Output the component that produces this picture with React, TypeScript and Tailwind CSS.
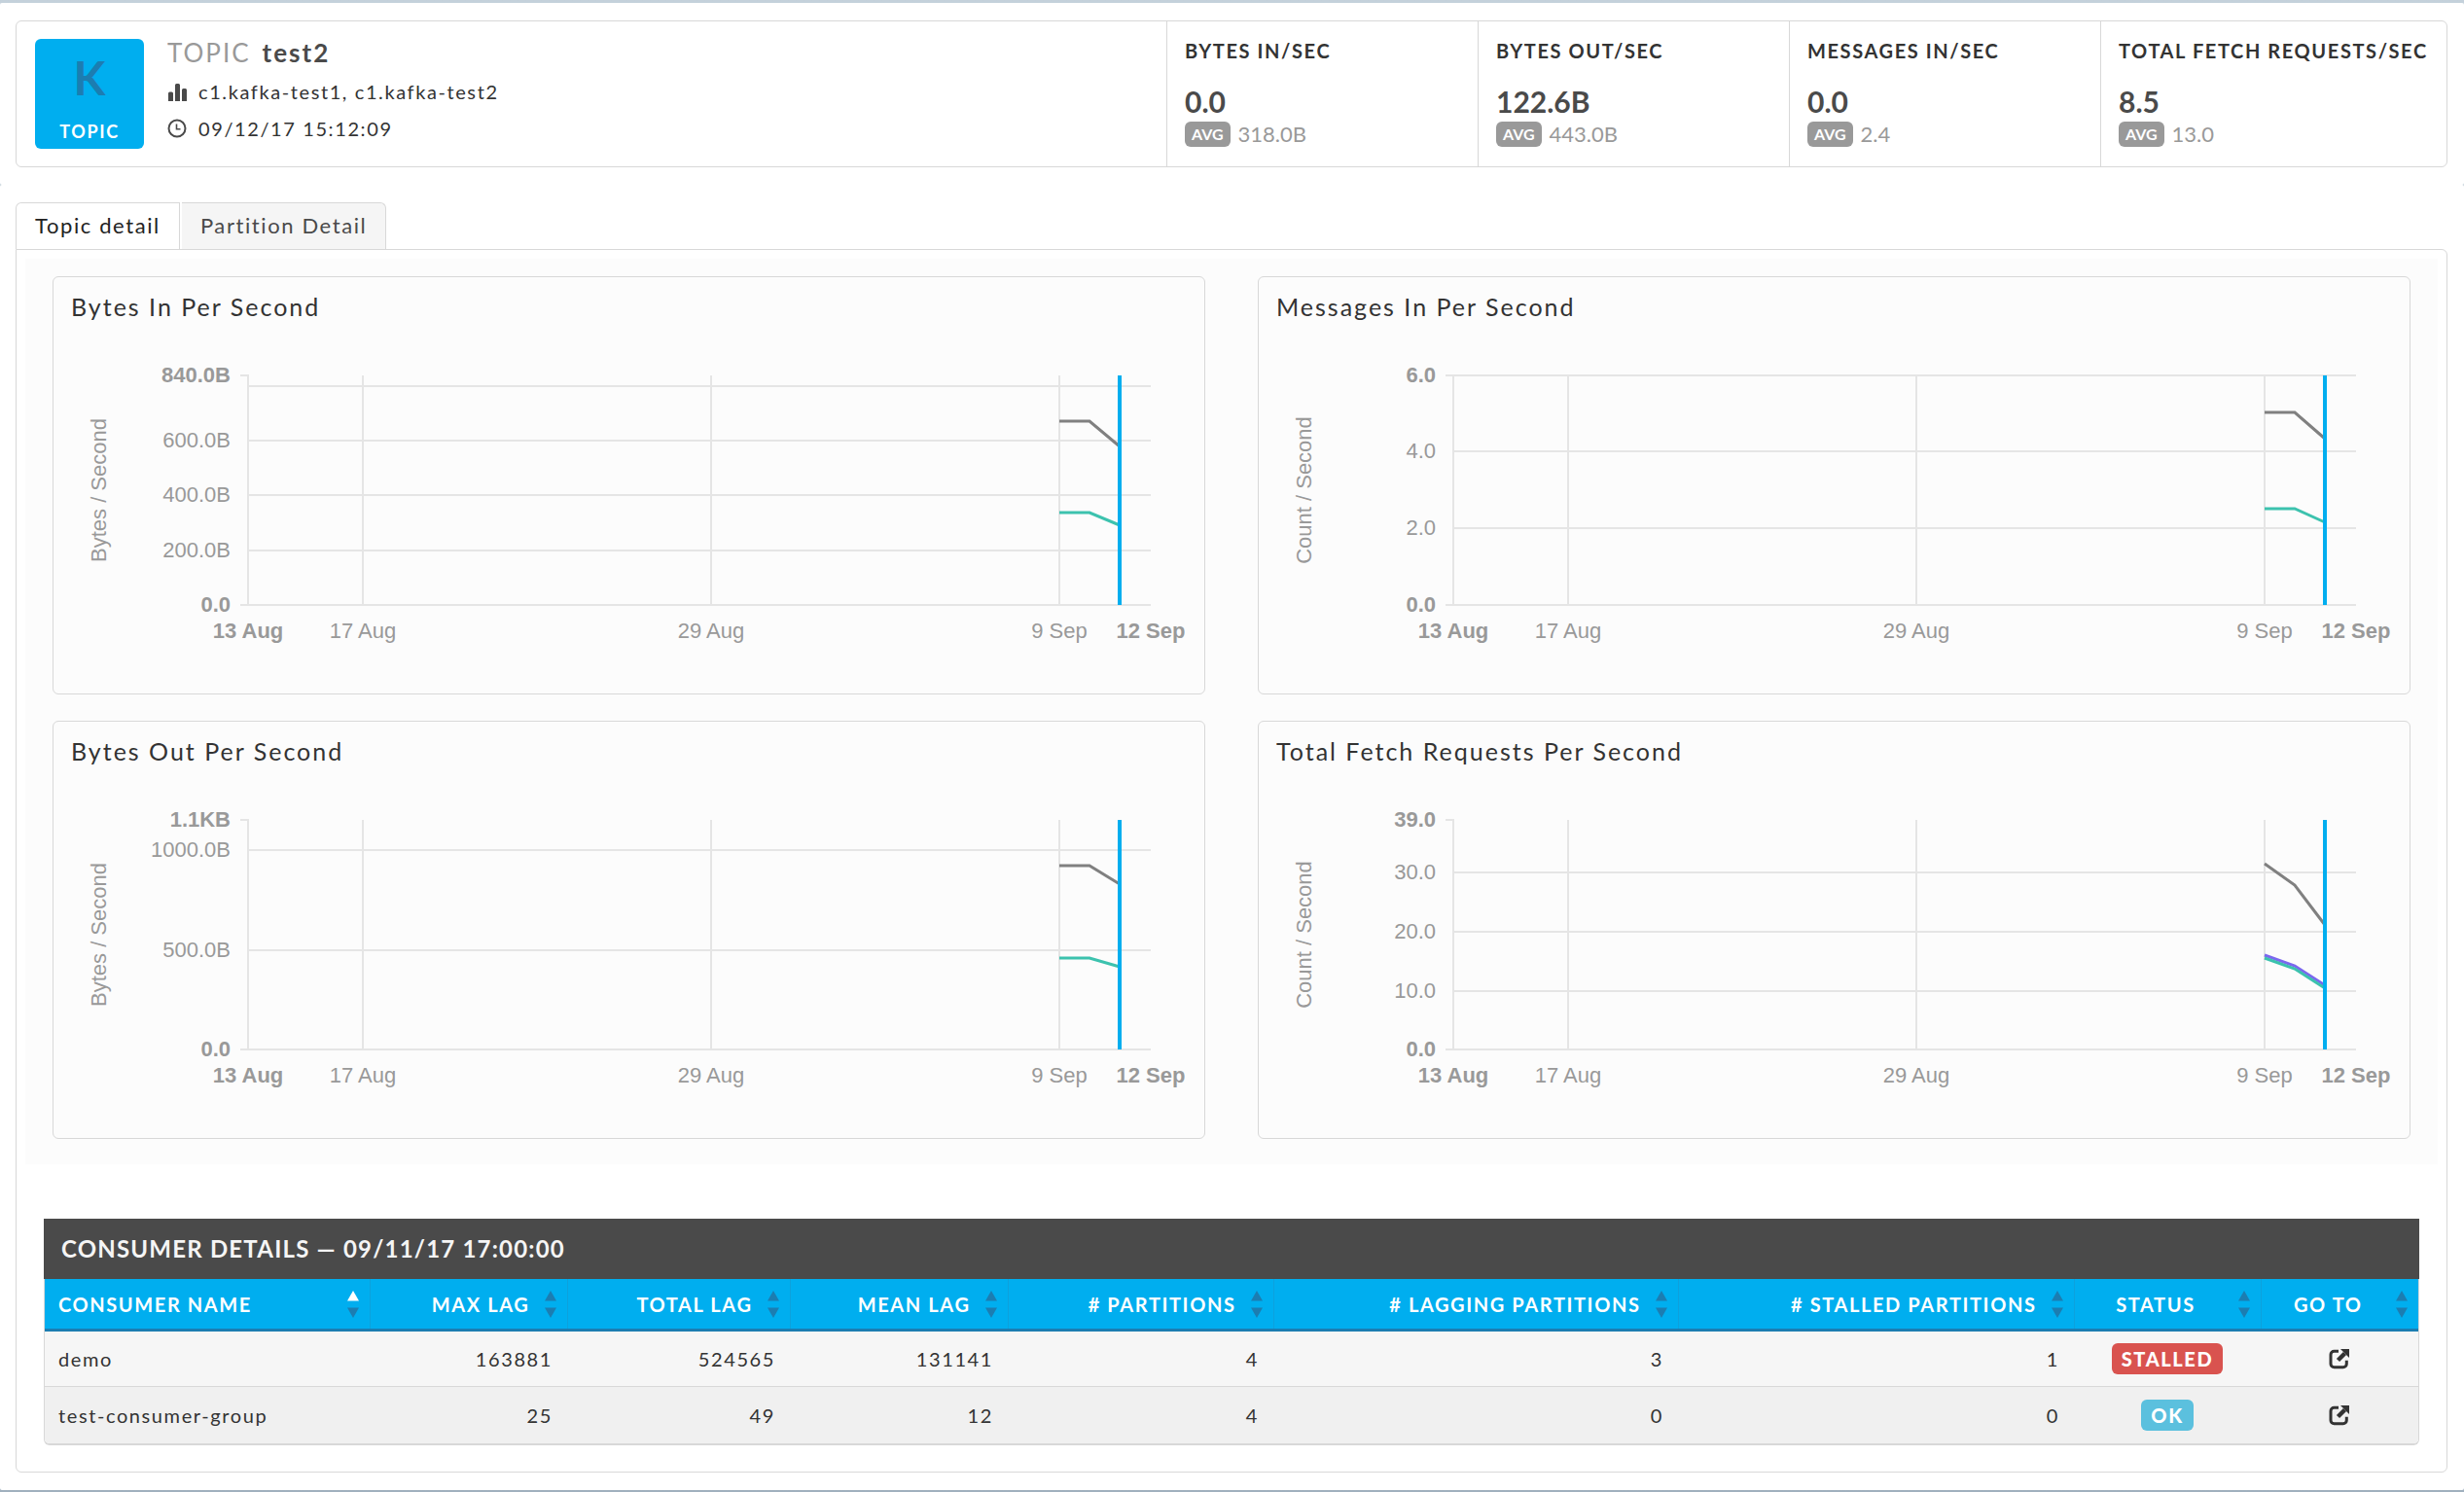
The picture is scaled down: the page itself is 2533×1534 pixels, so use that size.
import { useState } from "react";

type Series = { color: string; points: [number, number][] };

interface ChartData {
  title: string;
  unit: string;
  max: string;
  ticks: { label: string; y: number }[];
  series: Series[];
}

// chart geometry, in viewBox units
const LEFT = 200;
const RIGHT = 1128;
const TOP = 23;
const BOTTOM = 259;

const STATS = [
  { label: "Bytes In/Sec", value: "0.0", avg: "318.0B" },
  { label: "Bytes Out/Sec", value: "122.6B", avg: "443.0B" },
  { label: "Messages In/Sec", value: "0.0", avg: "2.4" },
  { label: "Total Fetch Requests/Sec", value: "8.5", avg: "13.0" },
];

const DATES = [
  { label: "17 Aug", x: 318 },
  { label: "29 Aug", x: 676 },
  { label: "9 Sep", x: 1034 },
];

const CHARTS: ChartData[] = [
  {
    title: "Bytes In Per Second",
    unit: "Bytes / Second",
    max: "840.0B",
    ticks: [
      { label: "", y: 34 },
      { label: "600.0B", y: 90 },
      { label: "400.0B", y: 146 },
      { label: "200.0B", y: 203 },
    ],
    series: [
      { color: "#808080", points: [[1034, 70], [1065, 70], [1096, 96]] },
      { color: "#3cc2ae", points: [[1034, 164], [1065, 164], [1096, 177]] },
    ],
  },
  {
    title: "Messages In Per Second",
    unit: "Count / Second",
    max: "6.0",
    ticks: [
      { label: "", y: 23 },
      { label: "4.0", y: 101 },
      { label: "2.0", y: 180 },
    ],
    series: [
      { color: "#808080", points: [[1034, 61], [1065, 61], [1096, 88]] },
      { color: "#3cc2ae", points: [[1034, 160], [1065, 160], [1096, 174]] },
    ],
  },
  {
    title: "Bytes Out Per Second",
    unit: "Bytes / Second",
    max: "1.1KB",
    ticks: [
      { label: "1000.0B", y: 54 },
      { label: "500.0B", y: 157 },
    ],
    series: [
      { color: "#808080", points: [[1034, 70], [1065, 70], [1096, 89]] },
      { color: "#3cc2ae", points: [[1034, 165], [1065, 165], [1096, 174]] },
    ],
  },
  {
    title: "Total Fetch Requests Per Second",
    unit: "Count / Second",
    max: "39.0",
    ticks: [
      { label: "30.0", y: 77 },
      { label: "20.0", y: 138 },
      { label: "10.0", y: 199 },
    ],
    series: [
      { color: "#808080", points: [[1034, 68], [1065, 90], [1096, 131]] },
      { color: "#7b68ee", points: [[1034, 162], [1065, 173], [1096, 193]] },
      { color: "#3cc2ae", points: [[1034, 165], [1065, 176], [1096, 196]] },
    ],
  },
];

const COLUMNS = [
  { label: "Consumer Name", width: "w-[334px]", align: "text-left" },
  { label: "Max Lag", width: "w-[203px]", align: "text-right" },
  { label: "Total Lag", width: "w-[229px]", align: "text-right" },
  { label: "Mean Lag", width: "w-[224px]", align: "text-right" },
  { label: "# Partitions", width: "w-[273px]", align: "text-right" },
  { label: "# Lagging Partitions", width: "w-[416px]", align: "text-right" },
  { label: "# Stalled Partitions", width: "w-[407px]", align: "text-right" },
  { label: "Status", width: "w-[192px]", align: "text-center" },
  { label: "Go To", width: "w-[162px]", align: "text-center" },
];

const CONSUMERS = [
  { name: "demo", numbers: [163881, 524565, 131141, 4, 3, 1], status: "STALLED" },
  { name: "test-consumer-group", numbers: [25, 49, 12, 4, 0, 0], status: "OK" },
];

function BarsIcon() {
  return (
    <svg width="20" height="20" viewBox="0 0 20 20" fill="#4a4a4a" aria-hidden="true">
      <path d="M1 20v-8a1.5 1.5 0 0 1 1.5-1.5h2A1.5 1.5 0 0 1 6 12v8zM8 20V3.500A1.500 1.500 0 0 1 9.500 2h2a1.500 1.500 0 0 1 1.500 1.500V20zM15 20V8.500A1.500 1.500 0 0 1 16.500 7h2a1.500 1.500 0 0 1 1.500 1.500V20z" />
    </svg>
  );
}

function ClockIcon() {
  return (
    <svg width="20" height="20" viewBox="0 0 20 20" fill="none" stroke="#4a4a4a" aria-hidden="true">
      <circle cx="10" cy="10" r="8.5" strokeWidth="2" />
      <path d="M9.5 5.5v5.2h4" strokeWidth="1.6" />
    </svg>
  );
}

function OpenIcon() {
  return (
    <svg width="22" height="22" viewBox="0 0 22 22" fill="none" stroke="#333" aria-hidden="true">
      <path d="M10 3.2H5.5A3.5 3.5 0 0 0 2 6.7v9.6a3.5 3.5 0 0 0 3.5 3.5h9.300a3.500 3.500 0 0 0 3.500-3.500v-3.500" strokeWidth="3" />
      <path d="M9.5 12.5l7-7" strokeWidth="4.500" />
      <path d="M12 1h9v9z" fill="#333" stroke="none" />
    </svg>
  );
}

function SortArrows({ active }: { active: boolean }) {
  return (
    <svg width="12" height="28" viewBox="0 0 12 28" fill="#1c7db1" aria-hidden="true">
      <path d="M6 0l6 10.500H0z" fill={active ? "#ffffff" : "#1c7db1"} />
      <path d="M6 28l6-10.500H0z" />
    </svg>
  );
}

function Chart({ data }: { data: ChartData }) {
  return (
    <div className="rounded-md border border-[#d8d8d8] pb-[42px]">
      <h3 className="px-[18px] pt-3.5 text-[25px] leading-8 tracking-[2px]">{data.title}</h3>
      <svg
        className="mt-8 block w-full"
        viewBox="0 0 1183 308"
        fontFamily="'Liberation Sans', Arial, sans-serif"
        fontSize="22"
        letterSpacing="0"
        fill="#999"
      >
        <g stroke="#e5e5e5" strokeWidth="2">
          <path d={`M${LEFT - 8} ${TOP}H${LEFT}V${BOTTOM}M${LEFT - 8} ${BOTTOM}H${RIGHT}`} fill="none" />
          {data.ticks.map((t) => (
            <line key={t.y} x1={LEFT} x2={RIGHT} y1={t.y} y2={t.y} />
          ))}
          {DATES.map((d) => (
            <line key={d.x} x1={d.x} x2={d.x} y1={TOP} y2={BOTTOM} />
          ))}
        </g>

        <text textAnchor="middle" transform="translate(54 141) rotate(-90)">{data.unit}</text>

        <g textAnchor="end">
          <text x="182" y={TOP + 7} fontWeight="bold">{data.max}</text>
          {data.ticks.map((t) => (
            <text key={t.y} x="182" y={t.y + 7}>{t.label}</text>
          ))}
          <text x="182" y={BOTTOM + 7} fontWeight="bold">0.0</text>
        </g>

        <g textAnchor="middle">
          <text x={LEFT} y="293" fontWeight="bold">13 Aug</text>
          {DATES.map((d) => (
            <text key={d.x} x={d.x} y="293">{d.label}</text>
          ))}
          <text x={RIGHT} y="293" fontWeight="bold">12 Sep</text>
        </g>

        {data.series.map((s) => (
          <polyline key={s.color} points={s.points.join(" ")} fill="none" stroke={s.color} strokeWidth="3" />
        ))}
        <line x1="1096" x2="1096" y1={TOP} y2={BOTTOM} stroke="#00aeef" strokeWidth="4" />
      </svg>
    </div>
  );
}

export default function App() {
  const [tab, setTab] = useState("Topic detail");
  const [sortBy, setSortBy] = useState("Consumer Name");

  return (
    <div className="min-h-screen bg-linear-to-b from-[#c4d1db] to-[#a0b0be] pt-[3px] pb-px font-[Lato,sans-serif] text-xl tracking-[0.08em] text-[#333]">
      <header className="rounded-xs bg-white py-[18px] pr-[17px] pl-4">
        <div className="flex rounded-md border border-[#d8d8d8]">
          <div className="flex flex-1 gap-6 pt-[18px] pl-[19px]">
            <div className="flex h-[113px] w-28 flex-col items-center justify-between rounded-md bg-[#00aeef] pt-3 pb-1">
              <span className="text-5xl leading-[56px] font-bold tracking-normal text-[#1c7db1]">K</span>
              <span className="text-lg leading-7 font-bold text-white">TOPIC</span>
            </div>
            <div className="-mt-0.5">
              <h1 className="text-[26px] leading-8 tracking-[2px]">
                <span className="mr-3 text-[#999]">TOPIC</span>
                <span className="font-bold text-[#4a4a4a]">test2</span>
              </h1>
              <p className="mt-[5px] flex items-center gap-3 leading-[38px]">
                <BarsIcon />
                c1.kafka-test1, c1.kafka-test2
              </p>
              <p className="flex items-center gap-3 leading-[38px]">
                <ClockIcon />
                09/12/17 15:12:09
              </p>
            </div>
          </div>
          {STATS.map((s) => (
            <div key={s.label} className="h-[149px] w-80 border-l border-[#d8d8d8] px-[18px] pt-3.5 last:w-[356px]">
              <h2 className="leading-8 font-bold whitespace-nowrap uppercase">{s.label}</h2>
              <p className="mt-4 text-3xl leading-10 font-bold tracking-normal text-[#4a4a4a]">{s.value}</p>
              <p className="flex items-center gap-2 text-[22px] leading-7 tracking-normal text-[#999]">
                <span className="rounded-md bg-[#999] px-[7px] text-base leading-[26px] font-bold text-white">AVG</span>
                {s.avg}
              </p>
            </div>
          ))}
        </div>
      </header>

      <main className="rounded-xs bg-white py-[18px] pr-[17px] pl-4">
        <div className="flex gap-0.5" role="tablist">
          {["Topic detail", "Partition Detail"].map((t) => (
            <button
              key={t}
              type="button"
              role="tab"
              aria-selected={tab === t}
              onClick={() => setTab(t)}
              className={
                "h-12 cursor-pointer border border-b-0 border-[#d8d8d8] px-[19px] text-[22px] first:rounded-tl-md last:rounded-tr-md last:border-l-0 " +
                (tab === t ? "bg-white text-[#222]" : "bg-[#f5f5f5] text-[#4a4a4a]")
              }
            >
              {t}
            </button>
          ))}
        </div>

        <div className="rounded-md rounded-tl-none border border-[#d8d8d8] px-[9px] pt-[9px] pb-[27px]">
          <section className="grid grid-cols-2 gap-x-[54px] gap-y-[27px] bg-[#fcfcfc] px-7 pt-[18px] pb-[26px]">
            {CHARTS.map((c) => (
              <Chart key={c.title} data={c} />
            ))}
          </section>

          <section className="mx-[19px] mt-14">
            <h2 className="bg-[#4a4a4a] px-[18px] text-2xl leading-[62px] font-bold tracking-wider text-[#f5f5f5]">
              CONSUMER DETAILS — 09/11/17 17:00:00
            </h2>
            <div className="overflow-hidden rounded-b-md border-x border-b-2 border-[#d8d8d8]">
              <table className="w-full table-fixed border-collapse">
                <thead>
                  <tr className="border-b-3 border-[#1c7db1] bg-[#00aeef]">
                    {COLUMNS.map((c) => (
                      <th
                        key={c.label}
                        scope="col"
                        className={"border-r border-[#0da1dc] p-0 last:border-r-0 " + c.width}
                      >
                        <button
                          type="button"
                          onClick={() => setSortBy(c.label)}
                          className="flex h-[51px] w-full cursor-pointer items-center gap-[15px] pr-[11px] pl-3.5 font-bold whitespace-nowrap text-white uppercase"
                        >
                          <span className={"flex-1 " + c.align}>{c.label}</span>
                          <SortArrows active={sortBy === c.label} />
                        </button>
                      </th>
                    ))}
                  </tr>
                </thead>
                <tbody>
                  {CONSUMERS.map((row) => (
                    <tr
                      key={row.name}
                      className="h-[58px] border-b border-[#d8d8d8] odd:bg-[#f6f6f6] even:bg-[#f0f0f0] last:border-b-0"
                    >
                      <td className="px-3.5">{row.name}</td>
                      {row.numbers.map((n, i) => (
                        <td key={i} className="px-[15px] text-right">{n}</td>
                      ))}
                      <td className="text-center">
                        <span
                          className={
                            "inline-block rounded-md px-2.5 leading-8 font-black text-white " +
                            (row.status === "OK" ? "bg-[#5bc0de]" : "bg-[#d9534f]")
                          }
                        >
                          {row.status}
                        </span>
                      </td>
                      <td>
                        <a href={"#" + row.name} aria-label={"Go to " + row.name} className="flex justify-center">
                          <OpenIcon />
                        </a>
                      </td>
                    </tr>
                  ))}
                </tbody>
              </table>
            </div>
          </section>
        </div>
      </main>
    </div>
  );
}
